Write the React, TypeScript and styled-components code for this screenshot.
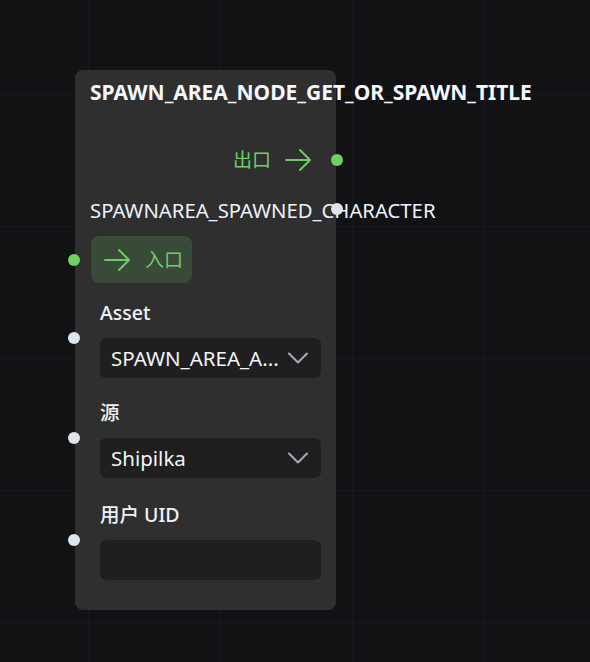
import styled, { createGlobalStyle } from "styled-components";

const GlobalStyle = createGlobalStyle`
  html, body {
    margin: 0;
    padding: 0;
    background: #121214;
  }
  body {
    font-family: "Noto Sans", "Noto Sans CJK SC", sans-serif;
    color: #eef2f8;
  }
`;

const Canvas = styled.div`
  position: relative;
  width: 590px;
  height: 662px;
  overflow: hidden;
  background-color: #121214;
  background-image: linear-gradient(#18181f 1px, transparent 1px),
    linear-gradient(90deg, #18181f 1px, transparent 1px),
    linear-gradient(#141417 1px, transparent 1px),
    linear-gradient(90deg, #141417 1px, transparent 1px);
  background-size: 132px 132px, 132px 132px, 26.4px 26.4px, 26.4px 26.4px;
  background-position: 88px 94px, 88px 94px, 88px 94px, 88px 94px;
`;

const Node = styled.div`
  position: absolute;
  left: 75px;
  top: 70px;
  width: 261px;
  height: 540px;
  box-sizing: border-box;
  background: #2f2f2f;
  border-radius: 8px;
  display: flex;
  flex-direction: column;
`;

const Title = styled.div`
  padding: 9px 15px 0;
  height: 26px;
  font-size: 21px;
  font-weight: 700;
  line-height: 26px;
  white-space: nowrap;
  color: #f4f7fc;
`;

const Row = styled.div<{ $align?: "left" | "right" }>`
  position: relative;
  display: flex;
  align-items: center;
  justify-content: ${(p) => (p.$align === "right" ? "flex-end" : "flex-start")};
`;

const Handle = styled.span<{ $side: "left" | "right"; $green?: boolean; $top?: number }>`
  position: absolute;
  ${(p) => (p.$side === "left" ? "left: -7px;" : "right: -7px;")}
  top: ${(p) => (p.$top !== undefined ? `${p.$top}px` : "50%")};
  margin-top: -6px;
  width: 12px;
  height: 12px;
  border-radius: 50%;
  background: ${(p) => (p.$green ? "#6fd063" : "#dfe5ef")};
  z-index: 2;
`;

const FlowText = styled.span`
  font-size: 19px;
  color: #71cc65;
  line-height: 24px;
`;

const ExitRow = styled(Row)`
  margin-top: 43px;
  height: 24px;
  padding-right: 24px;
  gap: 14px;
`;

const OutLabel = styled.div`
  margin-top: 26px;
  padding-left: 15px;
  height: 24px;
  font-size: 20.3px;
  line-height: 24px;
  white-space: nowrap;
  color: #eef2f8;
`;

const EntryRow = styled(Row)`
  margin-top: 14px;
  padding-left: 16px;
`;

const EntryButton = styled.div`
  display: flex;
  align-items: center;
  gap: 14px;
  width: 101px;
  height: 47px;
  box-sizing: border-box;
  padding-left: 13px;
  background: #3a4a38;
  border-radius: 8px;
`;

const Field = styled.div<{ $gap: number }>`
  display: flex;
  flex-direction: column;
  gap: 12px;
  margin-top: ${(p) => p.$gap}px;
  padding: 0 15px 0 25px;
`;

const FieldLabel = styled.div`
  height: 26px;
  font-size: 19.5px;
  font-weight: 500;
  line-height: 26px;
  color: #eef2f8;
  white-space: nowrap;
`;

const Box = styled.div`
  display: flex;
  align-items: center;
  justify-content: space-between;
  height: 40px;
  box-sizing: border-box;
  padding: 0 13px 0 11px;
  background: #1f1f1f;
  border-radius: 6px;
  font-size: 20.5px;
  color: #f2f5fa;
  flex: 1;
`;

const BoxText = styled.span`
  white-space: nowrap;
`;

const Arrow = () => (
  <svg width="27" height="24" viewBox="0 0 27 24" fill="none">
    <path
      d="M1 12H25M15 2L25 12L15 22"
      stroke="#6fcb63"
      strokeWidth="2"
      strokeLinecap="round"
      strokeLinejoin="round"
    />
  </svg>
);

const Chevron = () => (
  <svg width="20" height="12" viewBox="0 0 20 12" fill="none">
    <path
      d="M1 1.5L10 10.5L19 1.5"
      stroke="#a6adb8"
      strokeWidth="2"
      strokeLinecap="round"
      strokeLinejoin="round"
    />
  </svg>
);

type FieldDef = { label: string; value?: string; select: boolean; gap: number };

const fields: FieldDef[] = [
  { label: "Asset", value: "SPAWN_AREA_A...", select: true, gap: 17 },
  { label: "源", value: "Shipilka", select: true, gap: 22 },
  { label: "用户 UID", select: false, gap: 24 },
];

export default function App() {
  return (
    <>
      <GlobalStyle />
      <Canvas>
        <Node>
          <Title>SPAWN_AREA_NODE_GET_OR_SPAWN_TITLE</Title>
          <ExitRow $align="right">
            <FlowText>出口</FlowText>
            <Arrow />
            <Handle $side="right" $green />
          </ExitRow>
          <Row>
            <OutLabel>SPAWNAREA_SPAWNED_CHARACTER</OutLabel>
            <Handle $side="right" $top={37} />
          </Row>
          <EntryRow>
            <Handle $side="left" $green />
            <EntryButton>
              <Arrow />
              <FlowText>入口</FlowText>
            </EntryButton>
          </EntryRow>
          {fields.map((f) => (
            <Field key={f.label} $gap={f.gap}>
              <FieldLabel>{f.label}</FieldLabel>
              <Row>
                <Handle $side="left" $top={0} style={{ left: -32 }} />
                <Box>
                  {f.value && <BoxText>{f.value}</BoxText>}
                  {f.select && <Chevron />}
                </Box>
              </Row>
            </Field>
          ))}
        </Node>
      </Canvas>
    </>
  );
}
